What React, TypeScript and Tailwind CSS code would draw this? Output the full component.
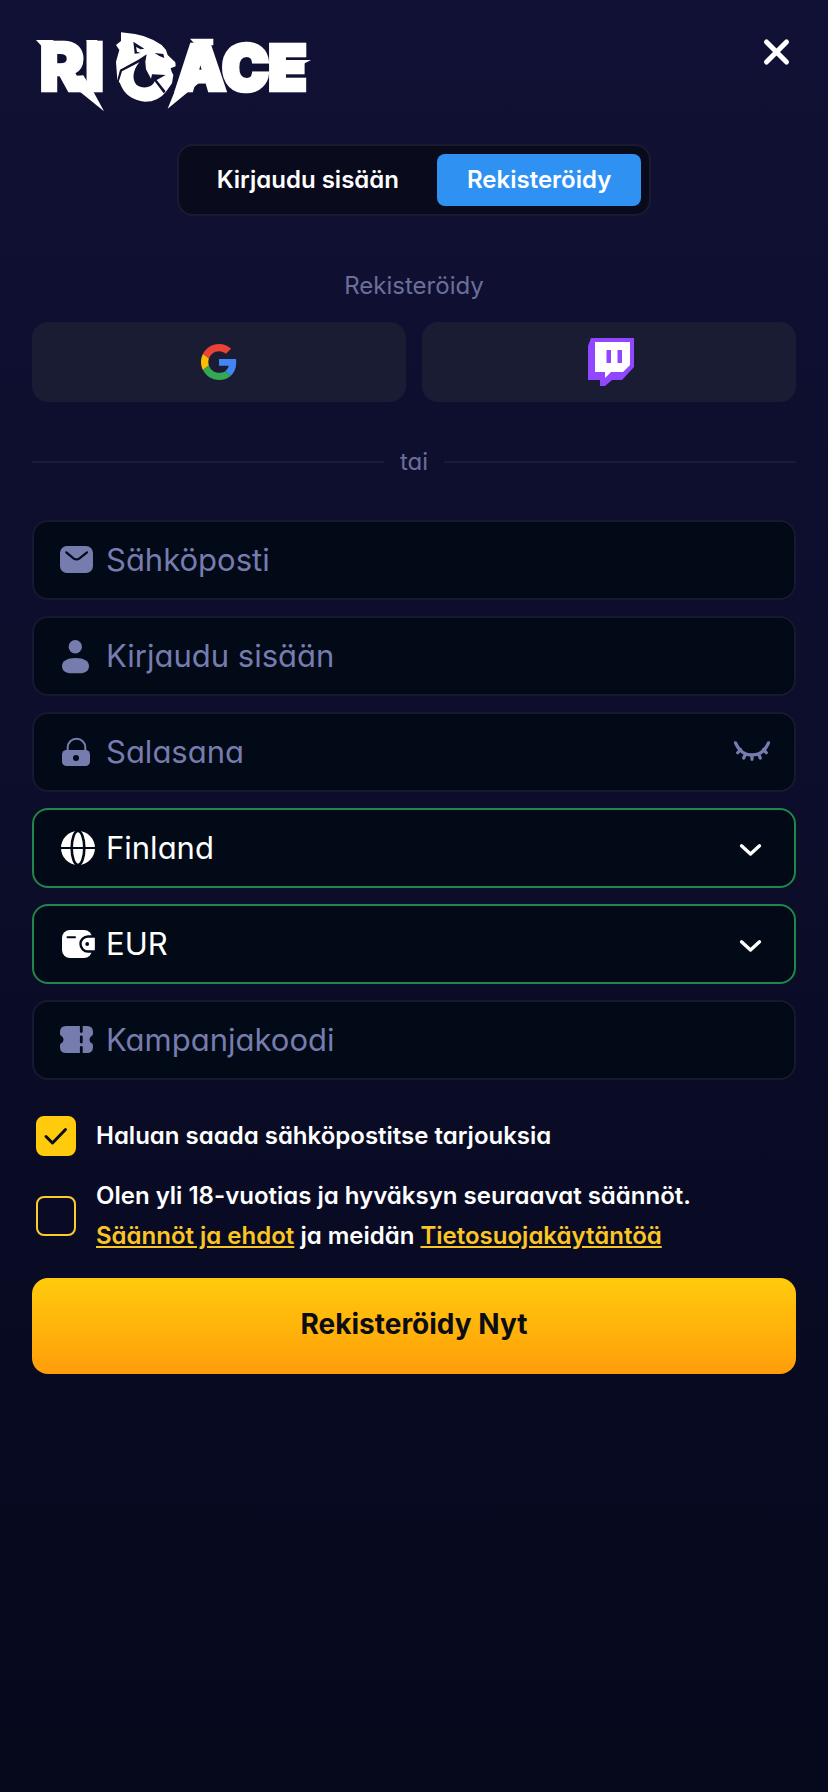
import { useState } from "react";
import type { ReactNode } from "react";

const iconColor = "#777cae";
const fieldBg = "#020917";

function Logo() {
  return (
    <svg viewBox="45 0 831 276" className="w-[277px] h-[92px]" fill="#fff" role="img" aria-label="RIOACE">
      <g fontFamily="Inter, sans-serif" fontWeight="900" stroke="#fff">
        <text x="58" y="213" fontSize="204" strokeWidth="8">RI</text>
        <text x="468" y="210" fontSize="186" strokeWidth="14">ACE</text>
      </g>
      {/* blades */}
      <path d="M48 60H100V84H70Z" />
      <path d="M124 170L190 166L222 218L252 274Z" />
      <path d="M198 60H232V84H214Z" />
      <path d="M510 56H580V76H528Z" />
      <path d="M520 110L536 190L443 266L474 190Z" />
      <path d="M792 120H873L792 162Z" />
      {/* lion */}
      <path d="M303 37L345 42L370 48L400 60L425 75L438 90L443 105L466 127L467 139L452 145L455 155L460 165L456 190L438 215Q415 245 375 245Q318 240 300 190L292 180L288 125L298 90L288 75L303 63Z" />
      <g fill="#111134">
        <path d="M291 184L300 149L355 119L380 103L376 125L378 148L393 176L396 163L437 165L410 180L437 214L431 220L404 184C396 205 366 207 350 195C335 180 338 150 358 127L306 154L296 186Z" />
        <path d="M340 65L373 86L362 88L348 81L351 95L362 99L344 101Z" />
        <path d="M404 99L430 102L433 114L418 108Z" />
      </g>
    </svg>
  );
}

function GoogleIcon() {
  return (
    <svg viewBox="0 0 48 48" className="w-9 h-9" aria-hidden="true">
      <path fill="#EA4335" d="M24 9.5c3.54 0 6.71 1.22 9.21 3.6l6.85-6.85C35.9 2.38 30.47 0 24 0 14.62 0 6.51 5.38 2.56 13.22l7.98 6.19C12.43 13.72 17.74 9.5 24 9.5z" />
      <path fill="#4285F4" d="M46.98 24.55c0-1.57-.15-3.09-.38-4.55H24v9.02h12.94c-.58 2.96-2.26 5.48-4.78 7.18l7.73 6c4.51-4.18 7.09-10.36 7.09-17.65z" />
      <path fill="#FBBC05" d="M10.53 28.59c-.48-1.45-.76-2.99-.76-4.59s.27-3.14.76-4.59l-7.98-6.19C.92 16.46 0 20.12 0 24c0 3.88.92 7.54 2.56 10.78l7.97-6.19z" />
      <path fill="#34A853" d="M24 48c6.48 0 11.93-2.13 15.89-5.81l-7.73-6c-2.15 1.45-4.92 2.3-8.16 2.3-6.26 0-11.57-4.22-13.47-9.91l-7.98 6.19C6.51 42.62 14.62 48 24 48z" />
    </svg>
  );
}

function TwitchIcon() {
  return (
    <svg viewBox="0 0 46 48" className="w-[46px] h-12" aria-hidden="true">
      <path fill="#9146FF" d="M3 0H46V29L34 42H24L17 48H12V42H0V8Z" />
      <path fill="#fff" d="M7 4H42V27L35 34H23L17 40V34H7Z" />
      <path fill="#9146FF" d="M18.5 12H23V25H18.5ZM29.500 12H34V25H29.500Z" />
    </svg>
  );
}

function Icon({ children }: { children: ReactNode }) {
  return (
    <svg viewBox="0 0 40 40" className="w-10 h-10 shrink-0 pointer-events-none" fill="none" strokeLinecap="round" strokeLinejoin="round" aria-hidden="true">
      {children}
    </svg>
  );
}

const MailIcon = () => (
  <Icon>
    <rect x="2" y="6" width="33" height="27" rx="7" fill={iconColor} />
    <path d="M8.300 12.300L15.500 18.300Q18.500 20.600 21.500 18.300L29 12.300" stroke={fieldBg} strokeWidth="2.200" />
  </Icon>
);

const UserIcon = () => (
  <Icon>
    <circle cx="17.300" cy="10.700" r="6.700" fill={iconColor} />
    <path d="M4 30C4 25 9 22 17.500 22S31 25 31 30C31 35 27 37.300 22 37.300H13C8 37.300 4 35 4 30Z" fill={iconColor} />
  </Icon>
);

const LockIcon = () => (
  <Icon>
    <path d="M9.700 19V15.500a8.800 8.800 0 0 1 17.600 0V19" stroke={iconColor} strokeWidth="2" />
    <rect x="4" y="18" width="28" height="16" rx="4.500" fill={iconColor} />
    <circle cx="18" cy="26" r="3" fill={fieldBg} />
  </Icon>
);

const GlobeIcon = () => (
  <Icon>
    <circle cx="20" cy="20" r="17" fill="#fff" />
    <ellipse cx="20" cy="20" rx="6.300" ry="17" stroke={fieldBg} strokeWidth="2.600" />
    <path d="M2 20H38" stroke={fieldBg} strokeWidth="2.200" />
  </Icon>
);

const WalletIcon = () => (
  <Icon>
    <rect x="4" y="6" width="30" height="28" rx="8" fill="#fff" />
    <path d="M9.500 13.300H17" stroke={fieldBg} strokeWidth="2" />
    <path d="M38 12.500H30a7.500 7.500 0 0 0 0 15H38Z" fill="#fff" stroke={fieldBg} strokeWidth="2.400" />
    <path d="M34 13.700Q36.300 14 36.300 17V23Q36.300 26.300 34 26.300Z" fill="#fff" />
    <path d="M37 11H40V30H37Z" fill={fieldBg} />
    <circle cx="29.200" cy="20" r="1.900" fill={fieldBg} />
  </Icon>
);

const TicketIcon = () => (
  <Icon>
    <path
      d="M8 6H29Q35 6 35 12V13.500Q35 15.500 33.500 16Q31.500 17 31.500 19.500T33.500 23Q35 23.500 35 25.500V27Q35 33 29 33H8Q2 33 2 27V25.500Q2 23.500 3.500 23Q5.500 22 5.500 19.500T3.500 16Q2 15.500 2 13.500V12Q2 6 8 6Z"
      fill={iconColor}
    />
    <path d="M23.300 5.500V11.500M23.300 17V22M23.300 27.500V33.500" stroke={fieldBg} strokeWidth="2.800" />
  </Icon>
);

const ClosedEyeIcon = () => (
  <Icon>
    <path d="M3.500 10.800C10.500 27 29.500 27 36.500 10.800M8.500 17.500L5.700 20.800M13.500 22L11.700 26M20 23.500V27.300M26.500 22L28.300 26M31.500 17.500L34.300 20.800" stroke={iconColor} strokeWidth="3.200" />
  </Icon>
);

const ChevronIcon = () => (
  <Icon>
    <path d="M9.500 17.800L18.500 26L27.500 17.800" stroke="#fff" strokeWidth="3.400" />
  </Icon>
);

function Field({ label, icon, valid, children }: { label: string; icon: ReactNode; valid?: boolean; children: ReactNode }) {
  return (
    <label
      aria-label={label}
      className={`flex h-20 items-center gap-2 rounded-2xl border-2 bg-[#020917] pl-6 pr-5.5 ${valid ? "border-[#1f874b]" : "border-[#16192f]"}`}
    >
      {icon}
      {children}
    </label>
  );
}

const inputClass = "min-w-0 flex-1 bg-transparent text-[31px] text-white placeholder-[#777cae] outline-none";
const selectClass = "min-w-0 flex-1 appearance-none bg-transparent text-[31px] text-white outline-none";

function Checkbox({ id, checked, onChange }: { id: string; checked: boolean; onChange: (v: boolean) => void }) {
  return (
    <span className="grid shrink-0">
      <input
        id={id}
        type="checkbox"
        checked={checked}
        onChange={(e) => onChange(e.target.checked)}
        className="col-start-1 row-start-1 size-10 appearance-none rounded-lg border-2 border-[#ffcb2b] checked:border-[#ffcb0c] checked:bg-[#ffcb0c]"
      />
      {checked && (
        <span className="col-start-1 row-start-1 pointer-events-none">
          <Icon>
            <path d="M10 20.500L16.500 27L29.500 13.500" stroke="#0b0c1c" strokeWidth="3" />
          </Icon>
        </span>
      )}
    </span>
  );
}

export default function App() {
  const [tab, setTab] = useState<"login" | "register">("register");
  const [showPassword, setShowPassword] = useState(false);
  const [offers, setOffers] = useState(true);
  const [terms, setTerms] = useState(false);

  return (
    <main className="min-h-screen bg-linear-to-b from-[#111135] via-[#0b0d29] to-[#06081c] px-8 pt-5 pb-10 font-[Inter,sans-serif] [font-feature-settings:'cv11']">
      <header className="flex items-start justify-between pl-[3px]">
        <Logo />
        <button type="button" aria-label="Sulje" className="mt-3">
          <Icon>
            <path d="M10.500 10L30.500 30M30.500 10L10.500 30" stroke="#fff" strokeWidth="5" />
          </Icon>
        </button>
      </header>

      <div className="mt-8 flex justify-center">
        <div className="flex gap-2 rounded-2xl border-2 border-[#1a1b31] bg-[#090b1c] p-2 text-2xl font-semibold text-white">
          <button
            type="button"
            onClick={() => setTab("login")}
            className={`h-13 rounded-lg px-7.5 ${tab === "login" ? "bg-[#2f92f2]" : ""}`}
          >
            Kirjaudu sisään
          </button>
          <button
            type="button"
            onClick={() => setTab("register")}
            className={`h-13 rounded-lg px-7.5 ${tab === "register" ? "bg-[#2f92f2]" : ""}`}
          >
            Rekisteröidy
          </button>
        </div>
      </div>

      <h1 className="mt-12.5 text-center text-2xl leading-10 text-[#6b6f98]">Rekisteröidy</h1>

      <div className="mt-4 grid grid-cols-2 gap-4">
        <button type="button" aria-label="Google" className="flex h-20 items-center justify-center rounded-2xl bg-[#1a1c34]">
          <GoogleIcon />
        </button>
        <button type="button" aria-label="Twitch" className="flex h-20 items-center justify-center rounded-2xl bg-[#1a1c34] pl-1">
          <TwitchIcon />
        </button>
      </div>

      <div className="mt-10 flex items-center gap-4 text-2xl leading-10 text-[#6b6f98]">
        <span className="h-0.5 flex-1 bg-[#1a1b38]" />
        tai
        <span className="h-0.5 flex-1 bg-[#1a1b38]" />
      </div>

      <form onSubmit={(e) => e.preventDefault()} className="mt-9.5">
        <div className="flex flex-col gap-4">
          <Field label="Sähköposti" icon={<MailIcon />}>
            <input type="email" placeholder="Sähköposti" className={inputClass} />
          </Field>
          <Field label="Kirjaudu sisään" icon={<UserIcon />}>
            <input type="text" placeholder="Kirjaudu sisään" className={inputClass} />
          </Field>
          <Field label="Salasana" icon={<LockIcon />}>
            <input type={showPassword ? "text" : "password"} placeholder="Salasana" className={inputClass} />
            <button type="button" aria-label="Näytä salasana" onClick={() => setShowPassword(!showPassword)}>
              <ClosedEyeIcon />
            </button>
          </Field>
          <Field label="Maa" icon={<GlobeIcon />} valid>
            <select className={selectClass}>
              <option>Finland</option>
            </select>
            <ChevronIcon />
          </Field>
          <Field label="Valuutta" icon={<WalletIcon />} valid>
            <select className={selectClass}>
              <option>EUR</option>
            </select>
            <ChevronIcon />
          </Field>
          <Field label="Kampanjakoodi" icon={<TicketIcon />}>
            <input type="text" placeholder="Kampanjakoodi" className={inputClass} />
          </Field>
        </div>

        <div className="mt-9 flex flex-col gap-5 pl-1 text-2xl leading-10 font-semibold text-white">
          <div className="flex items-center gap-5">
            <Checkbox id="offers" checked={offers} onChange={setOffers} />
            <label htmlFor="offers">Haluan saada sähköpostitse tarjouksia</label>
          </div>
          <div className="flex items-center gap-5">
            <Checkbox id="terms" checked={terms} onChange={setTerms} />
            <label htmlFor="terms">
              Olen yli 18-vuotias ja hyväksyn seuraavat säännöt.
              <br />
              <a href="#terms" className="text-[#fbc624] underline">Säännöt ja ehdot</a> ja meidän{" "}
              <a href="#privacy" className="text-[#fbc624] underline">Tietosuojakäytäntöä</a>
            </label>
          </div>
        </div>

        <button
          type="submit"
          className="mt-5.5 h-24 w-full rounded-2xl bg-linear-to-b from-[#ffcb0c] to-[#ff9d0a] pb-1 text-[28px] font-bold text-[#0c0c14]"
        >
          Rekisteröidy Nyt
        </button>
      </form>
    </main>
  );
}
